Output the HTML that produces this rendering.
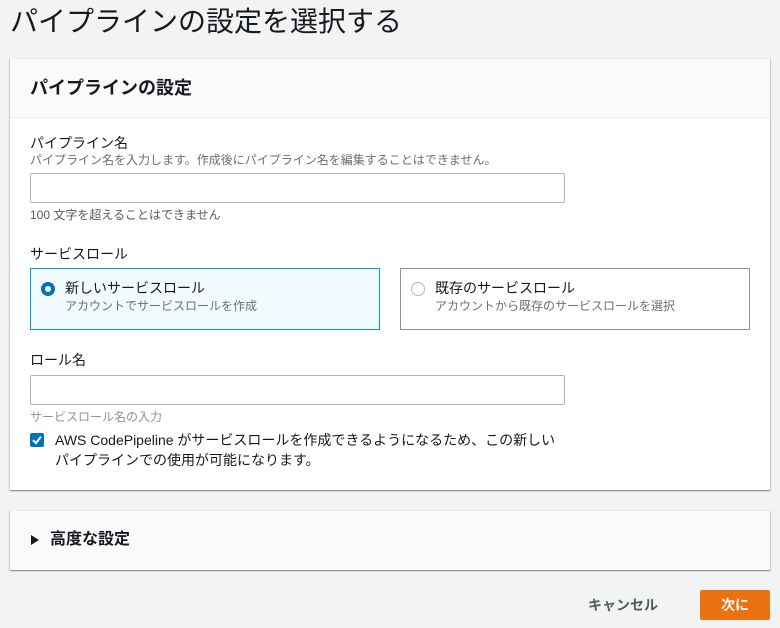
<!DOCTYPE html>
<html><head><meta charset="utf-8"><style>
*{margin:0;padding:0;box-sizing:border-box}
body{width:780px;height:628px;background:#f2f3f3;font-family:"Liberation Sans","Noto Sans CJK JP",sans-serif;color:#16191f;position:relative;overflow:hidden}
.a{position:absolute;white-space:nowrap}
.card{position:absolute;background:#fff;box-shadow:0 1px 1px rgba(0,28,36,.3),1px 1px 1px rgba(0,28,36,.15),-1px 1px 1px rgba(0,28,36,.15);border-top:1px solid #eaeded}
.inp{position:absolute;border:1px solid #aab7b8;background:#fff;border-radius:2px}
.desc{font-size:12px;color:#687078}
</style></head><body>
<div class="a" style="left:10px;top:3px;font-size:28px;line-height:38px">パイプラインの設定を選択する</div>

<div class="card" style="left:10px;top:58px;width:760px;height:432px">
  <div style="height:59px;background:#fafafa;border-bottom:1px solid #eaeded"></div>
</div>
<div class="a" style="left:30px;top:76px;font-size:18px;font-weight:bold;line-height:24px">パイプラインの設定</div>

<div class="a" style="left:30px;top:133px;font-size:14px;line-height:20px">パイプライン名</div>
<div class="a desc" style="left:30px;top:152px;line-height:16px">パイプライン名を入力します。作成後にパイプライン名を編集することはできません。</div>
<div class="inp" style="left:30px;top:173px;width:535px;height:30px"></div>
<div class="a desc" style="left:30px;top:207px;line-height:16px;color:#545b64">100 文字を超えることはできません</div>

<div class="a" style="left:30px;top:244px;font-size:14px;line-height:20px">サービスロール</div>
<div class="a" style="left:30px;top:268px;width:350px;height:62px;border:1px solid #00a1c9;background:#f1faff"></div>
<div class="a" style="left:41px;top:282px;width:14px;height:14px;border-radius:50%;border:4px solid #0073bb;background:#fff"></div>
<div class="a" style="left:65px;top:278px;font-size:14px;line-height:20px">新しいサービスロール</div>
<div class="a desc" style="left:65px;top:298px;line-height:16px">アカウントでサービスロールを作成</div>

<div class="a" style="left:400px;top:268px;width:350px;height:62px;border:1px solid #879596;background:#fff"></div>
<div class="a" style="left:411px;top:282px;width:14px;height:14px;border-radius:50%;border:1px solid #aab7b8;background:#fff"></div>
<div class="a" style="left:435px;top:278px;font-size:14px;line-height:20px">既存のサービスロール</div>
<div class="a desc" style="left:435px;top:298px;line-height:16px">アカウントから既存のサービスロールを選択</div>

<div class="a" style="left:30px;top:350px;font-size:14px;line-height:20px">ロール名</div>
<div class="inp" style="left:30px;top:375px;width:535px;height:30px"></div>
<div class="a desc" style="left:30px;top:409px;line-height:16px;color:#879596">サービスロール名の入力</div>

<div class="a" style="left:30px;top:433px;width:14px;height:14px;background:#0073bb;border-radius:2px">
<svg width="14" height="14" viewBox="0 0 14 14"><path d="M3 7.2 L6 10 L11 3.8" stroke="#fff" stroke-width="2" fill="none"/></svg></div>
<div class="a" style="left:55px;top:430px;font-size:14px;line-height:20px">AWS CodePipeline がサービスロールを作成できるようになるため、この新しい<br>パイプラインでの使用が可能になります。</div>

<div class="card" style="left:10px;top:510px;width:760px;height:60px;background:#fafafa"></div>
<div class="a" style="left:31px;top:535px;width:0;height:0;border-top:5px solid transparent;border-bottom:5px solid transparent;border-left:8px solid #16191f"></div>
<div class="a" style="left:50px;top:529px;font-size:16px;font-weight:bold;line-height:22px">高度な設定</div>

<div class="a" style="left:588px;top:595px;font-size:14px;font-weight:bold;color:#545b64;line-height:20px">キャンセル</div>
<div class="a" style="left:700px;top:590px;width:70px;height:30px;background:#ec7211;border-radius:2px;color:#fff;font-size:14px;font-weight:bold;text-align:center;line-height:30px">次に</div>
</body></html>
